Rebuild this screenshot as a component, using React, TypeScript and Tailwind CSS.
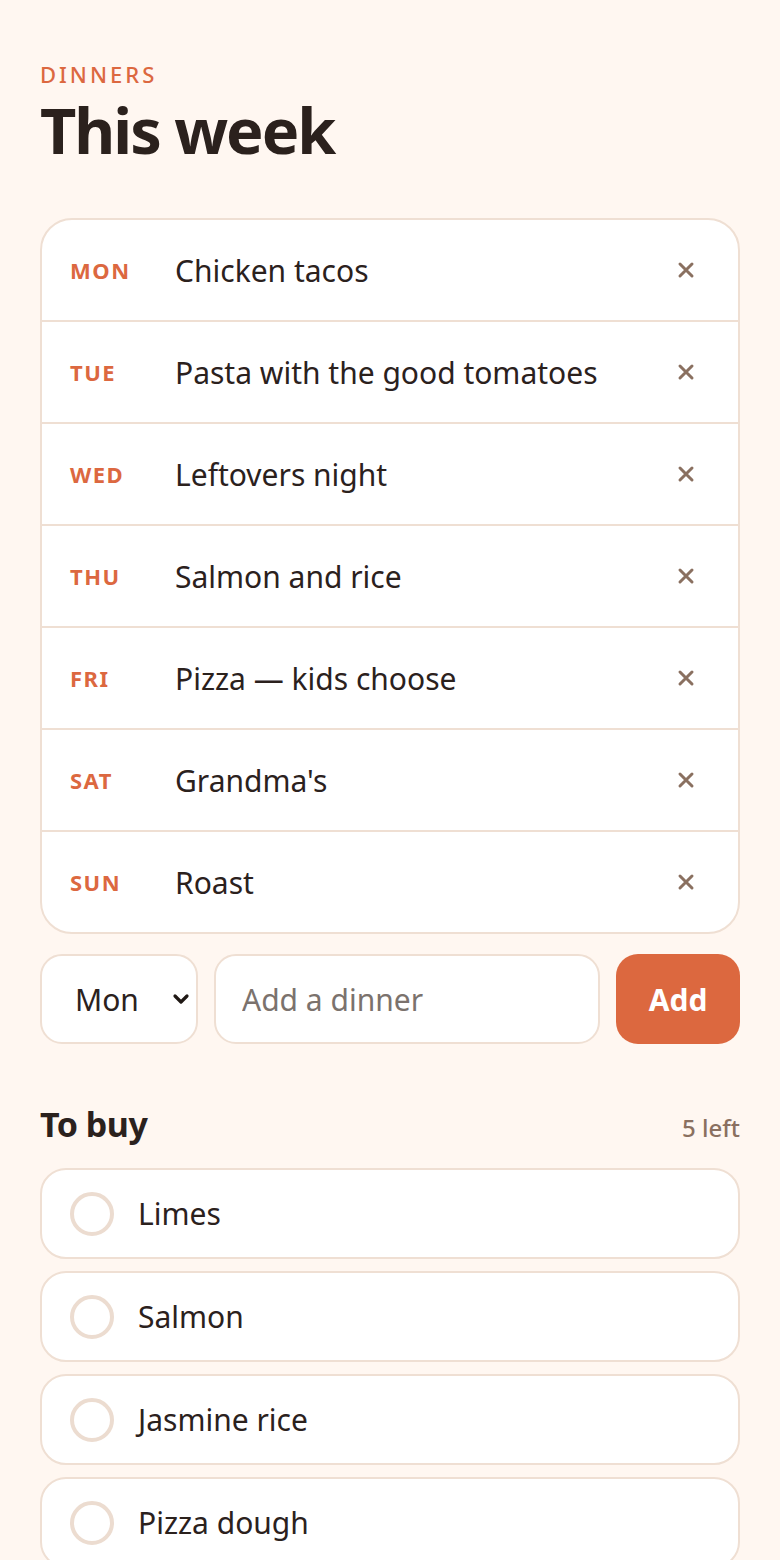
import React, { useState } from "react";

const dinners = [
  ["MON", "Chicken tacos"],
  ["TUE", "Pasta with the good tomatoes"],
  ["WED", "Leftovers night"],
  ["THU", "Salmon and rice"],
  ["FRI", "Pizza — kids choose"],
  ["SAT", "Grandma's"],
  ["SUN", "Roast"],
];

const items = ["Limes", "Salmon", "Jasmine rice", "Pizza dough"];

function XIcon() {
  return (
    <svg width="18" height="18" viewBox="0 0 18 18" fill="none">
      <path d="M3 3L15 15M15 3L3 15" stroke="#8a7060" strokeWidth="3" strokeLinecap="round" />
    </svg>
  );
}

export default function App() {
  const [day, setDay] = useState("Mon");
  return (
    <div
      className="min-h-[1560px] bg-[#fff7f1] px-[40px] pt-[60px] pb-[40px] text-[#2b211d]"
      style={{ fontFamily: '"Noto Sans", "Open Sans", sans-serif' }}
    >
      <div className="text-[22px] leading-[28px] tracking-[3px] font-medium text-[#dc6840]">DINNERS</div>
      <h1 className="mt-[4px] text-[63px] leading-[76px] font-bold tracking-[-2px] text-[#2b211d]">This week</h1>

      <div className="mt-[50px] rounded-[32px] border-2 border-[#efdfd3] bg-white overflow-hidden">
        {dinners.map(([d, m], i) => (
          <div
            key={d}
            className={`flex items-center px-[28px] ${i < dinners.length - 1 ? "h-[102px] border-b-2 border-[#efdfd3]" : "h-[100px]"}`}
          >
            <div className="w-[105px] text-[22px] font-bold tracking-[1.5px] text-[#dc6840]">{d}</div>
            <div className="flex-1 text-[30px] text-[#2b211d]">{m}</div>
            <button className="w-[48px] h-[48px] flex items-center justify-center">
              <XIcon />
            </button>
          </div>
        ))}
      </div>

      <div className="mt-[20px] flex gap-[16px] h-[90px]">
        <div className="relative w-[158px] h-full">
          <select
            value={day}
            onChange={(e) => setDay(e.target.value)}
            className="appearance-none w-full h-full rounded-[22px] border-2 border-[#efdfd3] bg-white pl-[33px] text-[30px] text-[#2b211d] outline-none"
          >
            {["Mon", "Tue", "Wed", "Thu", "Fri", "Sat", "Sun"].map((d) => (
              <option key={d}>{d}</option>
            ))}
          </select>
          <svg className="absolute right-[8px] top-1/2 -translate-y-1/2 pointer-events-none" width="18" height="14" viewBox="0 0 18 14" fill="none">
            <path d="M3 4L9 10L15 4" stroke="#1f1814" strokeWidth="3.2" strokeLinecap="round" strokeLinejoin="round" />
          </svg>
        </div>
        <input
          placeholder="Add a dinner"
          className="flex-1 min-w-0 h-full rounded-[22px] border-2 border-[#efdfd3] bg-white px-[26px] text-[30px] text-[#2b211d] placeholder:text-[#7b726d] outline-none"
        />
        <button className="w-[124px] h-full rounded-[22px] bg-[#dc683f] text-white text-[30px] font-bold">Add</button>
      </div>

      <div className="mt-[58px] flex items-end justify-between">
        <h2 className="text-[34px] leading-[44px] font-bold tracking-[-0.5px] text-[#2b211d]">To buy</h2>
        <span className="text-[24px] leading-[36px] font-medium text-[#8a7060]">5 left</span>
      </div>

      <div className="mt-[22px] flex flex-col gap-[12px]">
        {items.map((it) => (
          <div key={it} className="flex items-center h-[91px] rounded-[26px] border-2 border-[#efdfd3] bg-white px-[28px]">
            <span className="w-[44px] h-[44px] rounded-full border-[4px] border-[#ecdcd0] shrink-0" />
            <span className="ml-[24px] text-[30px] text-[#2b211d]">{it}</span>
          </div>
        ))}
      </div>
    </div>
  );
}
